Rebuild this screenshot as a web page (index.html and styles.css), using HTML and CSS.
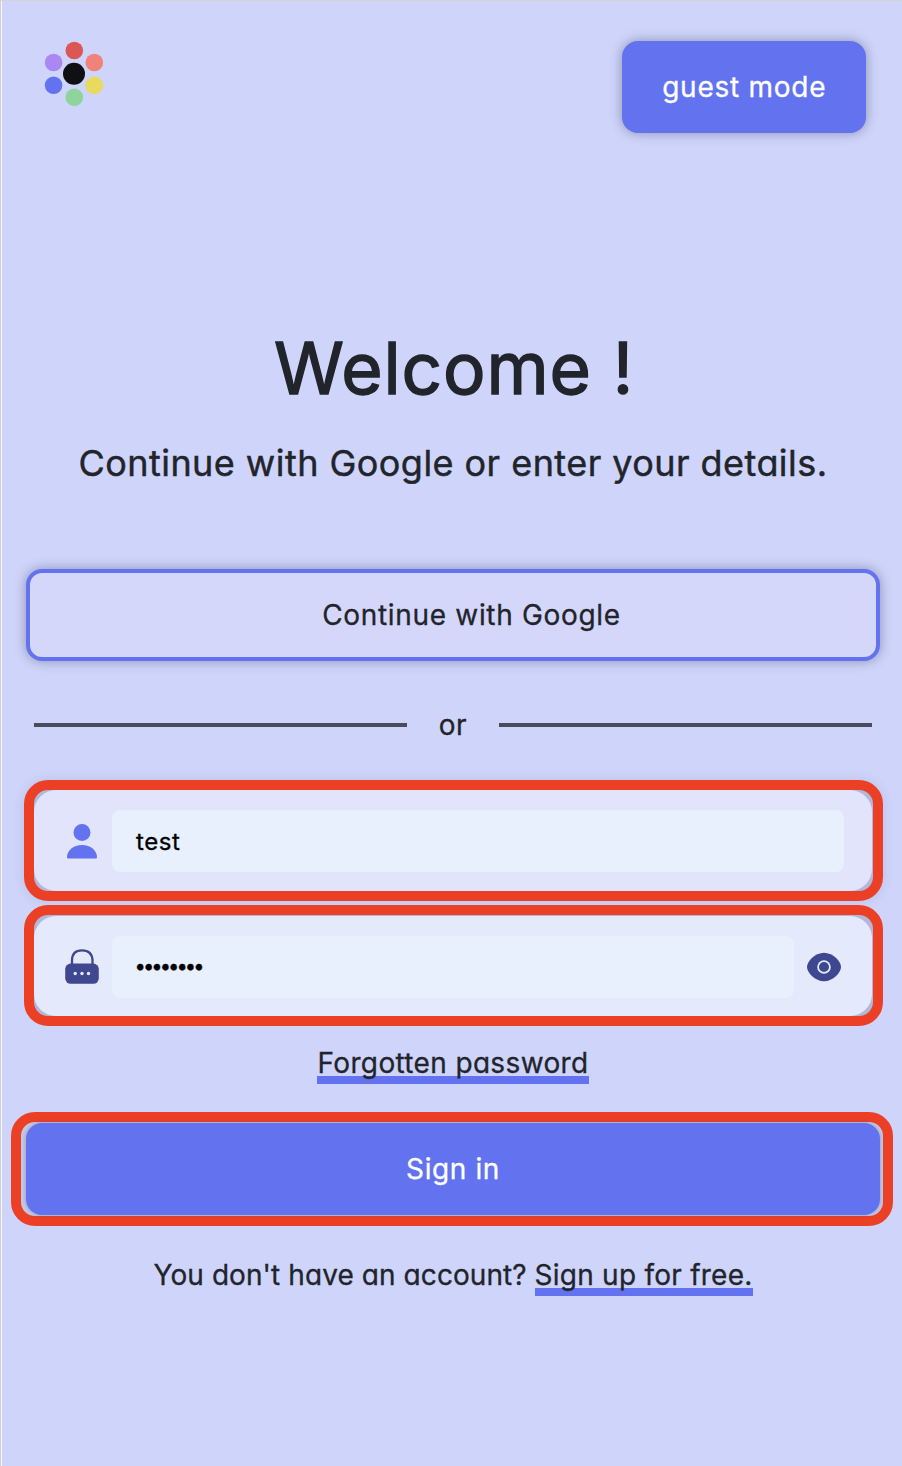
FILE: index.html
```html
<!DOCTYPE html>
<html lang="en">
<head>
<meta charset="utf-8">
<title>Sign in</title>
<link rel="stylesheet" href="styles.css">
</head>
<body>
<div class="page">
  <header class="header">
    <svg class="logo" width="60" height="66" viewBox="0 0 60 66">
      <circle cx="30.3" cy="9.5" r="8.8" fill="#dc5656"/>
      <circle cx="50.3" cy="21.5" r="8.8" fill="#ef8379"/>
      <circle cx="50.3" cy="44.3" r="8.8" fill="#e8da5d"/>
      <circle cx="30.3" cy="56.3" r="8.8" fill="#8dd59c"/>
      <circle cx="9.6" cy="44.3" r="8.8" fill="#6373ef"/>
      <circle cx="9.6" cy="21.5" r="8.8" fill="#aa87f3"/>
      <circle cx="30" cy="32.8" r="11" fill="#101014"/>
    </svg>
    <button class="button guest">guest mode</button>
  </header>
  <main class="main">
    <h1 class="title">Welcome !</h1>
    <p class="subtitle">Continue with Google or enter your details.</p>
    <button class="button google">Continue with Google</button>
    <div class="divider"><i class="rule"></i><span class="or">or</span><i class="rule"></i></div>
    <div class="frame">
      <div class="field">
        <svg class="icon" width="34" height="36" viewBox="0 0 34 36"><circle cx="17" cy="9.6" r="8.5" fill="#6373ef"/><path d="M2 34.3C2 27.5 8.5 22 17 22s15 5.500 15 12.300q0 1.200-1.200 1.200H3.200Q2 35.500 2 34.300z" fill="#6373ef"/></svg>
        <div class="input">test</div>
      </div>
    </div>
    <div class="frame second">
      <div class="field light">
        <svg class="icon" width="34" height="36" viewBox="0 0 34 36"><path d="M7 17V11.500Q7 1.300 17 1.300t10.500 10V17" fill="none" stroke="#3e478f" stroke-width="2.300"/><rect x="0.200" y="14.600" width="33.600" height="20.200" rx="5.500" fill="#3e478f"/><circle cx="10.200" cy="24.500" r="1.700" fill="#e5e9fc"/><circle cx="17" cy="24.500" r="1.700" fill="#e5e9fc"/><circle cx="23.500" cy="24.500" r="1.700" fill="#e5e9fc"/></svg>
        <div class="input password">••••••••</div>
        <svg class="eye" width="34" height="30" viewBox="0 0 34 30"><path d="M0 15C0 9.500 8 .7 17 .7S34 9.500 34 15 26 29.300 17 29.300 0 20.500 0 15z" fill="#3e478f"/><circle cx="17" cy="15" r="5.900" fill="none" stroke="#e5e9fc" stroke-width="1.800"/></svg>
      </div>
    </div>
    <a class="link forgot">Forgotten password</a>
    <div class="submit"><button class="button signin">Sign in</button></div>
    <p class="signup"><span class="ask">You don't have an account?</span><a class="link free">Sign up for free.</a></p>
  </main>
</div>
</body>
</html>
```
FILE: styles.css
```css
* { box-sizing: border-box; }
body {
  margin: 0;
  background: #ced4fa;
  color: #22242b;
  font-family: Inter, "Open Sans", sans-serif;
  font-feature-settings: "cv11" 1, "ss03" 1;
  font-size: 28px;
  -webkit-text-stroke: .3px currentColor;
}
.page {
  min-height: 1466px;
  border-top: 1px solid #d4d4d8;
  border-left: 1px solid #d0d0d3;
  box-shadow: inset 1px 0 #f6f7ff;
}
.header {
  display: flex;
  justify-content: space-between;
  align-items: flex-start;
  padding: 40px 36px 0 43px;
}
.logo { display: block; }
.button {
  display: flex;
  align-items: center;
  justify-content: center;
  height: 92px;
  padding: 0;
  border: 0;
  border-radius: 16px;
  background: #6373ef;
  color: #fff;
  font: inherit;
  font-feature-settings: inherit;
  white-space: nowrap;
  box-shadow: 0 0 12px rgba(60, 60, 90, .45);
}
.guest { width: 244.500px; padding-left: 1px; letter-spacing: .75px; }
.main {
  display: flex;
  flex-direction: column;
  align-items: center;
  padding: 190px 0 0 3px;
  white-space: nowrap;
}
.title { margin: 0; height: 90px; line-height: 90px; font-size: 71px; font-weight: 400; letter-spacing: .9px; padding-left: 2px; -webkit-text-stroke-width: 1.4px; }
.subtitle { margin: 25px 0 81px; height: 50px; line-height: 50px; font-size: 36px; letter-spacing: .45px; -webkit-text-stroke-width: .45px; }
.google {
  width: 854px;
  padding-left: 37px;
  border: 4px solid #6373ef;
  background: #d4d7fa;
  color: #22242b;
  letter-spacing: .68px;
}
.divider {
  display: flex;
  align-items: center;
  width: 838px;
  height: 40px;
  margin: 44px 0 35px;
}
.rule { flex: 1; height: 4px; background: #484c5b; }
.or { width: 92px; text-align: center; line-height: 40px; letter-spacing: .5px; }
.frame {
  width: 859px;
  height: 121px;
  border: 10px solid #eb4026;
  border-radius: 24px;
  background: #b1b8dc;
  box-shadow: 0 0 12px rgba(80, 80, 130, .14);
}
.second { margin-top: 4px; padding-top: 1px; box-shadow: none; }
.field {
  display: flex;
  align-items: center;
  height: 101px;
  margin-right: 1px;
  padding: 0 28px 0 31px;
  border-radius: 22px;
  background: #e1e4fb;
}
.light { height: 100px; padding-top: 1px; background: #e5e9fc; }
.icon { margin-right: 13px; }
.input {
  flex: 1;
  height: 62px;
  padding-left: 24.500px;
  border-radius: 8px;
  background: #e8effd;
  color: #000;
  font-size: 24px;
  line-height: 63px;
  letter-spacing: .6px;
}
.password { font-size: 20px; line-height: 61px; letter-spacing: -2.860px; padding-left: 23px; }
.eye { margin: 0 3px 0 13px; }
.link { height: 42px; line-height: 42px; background: linear-gradient(#6373ef, #6373ef) bottom / 100% 8px no-repeat; }
.forgot { width: 272px; margin: 16px 0 28px; text-align: center; letter-spacing: .35px; }
.submit {
  width: 882px;
  height: 114px;
  margin-right: 2px;
  padding: 1px 3px 1px 5px;
  border: 10px solid #eb4026;
  border-radius: 24px;
  background: #c4c9e8;
}
.signin { width: 854px; letter-spacing: .6px; box-shadow: 0 0 4px rgba(60, 60, 90, .35); }
.signup { display: flex; width: 599px; margin: 28px 0 0; justify-content: space-between; line-height: 42px; }
.ask { letter-spacing: .08px; }
.free { width: 218px; letter-spacing: .25px; }
```
